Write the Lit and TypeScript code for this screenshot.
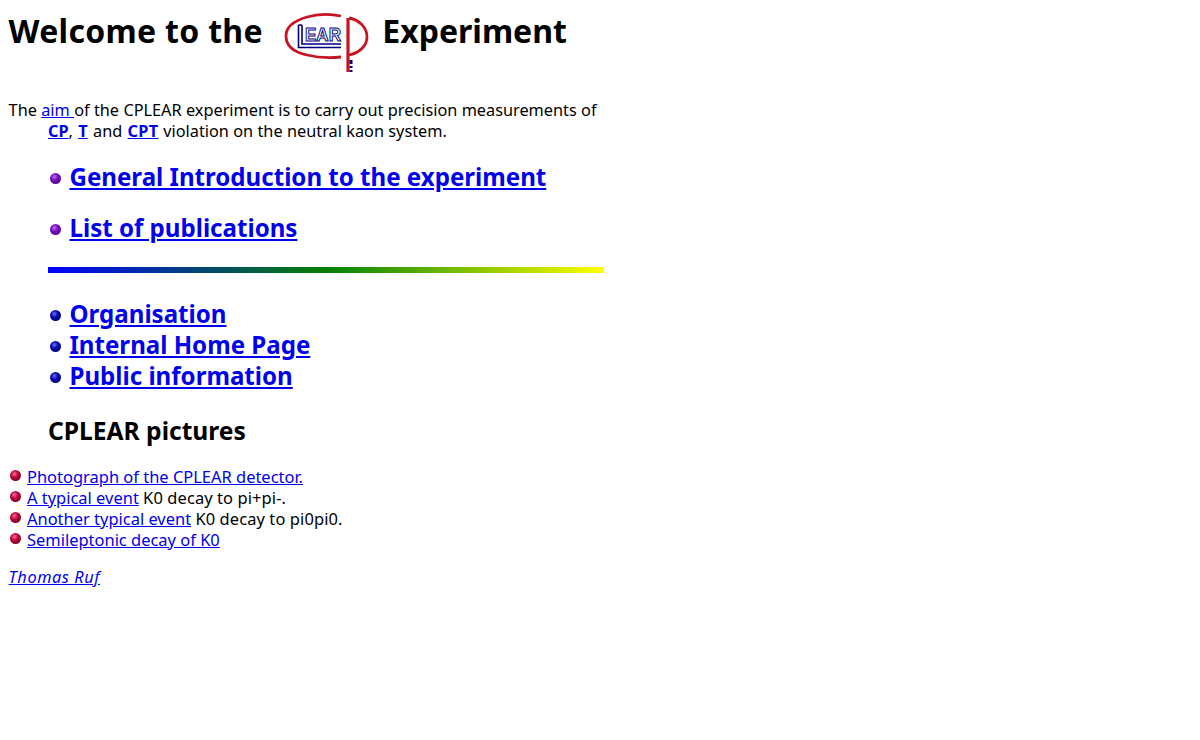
import { LitElement, html, css } from "lit";
import { customElement } from "lit/decorators.js";

const ball = (cls: string) => html`<span class="ball ${cls}"></span>`;

@customElement("app-root")
export class AppRoot extends LitElement {
  static styles = css`
    :host { display: block; font-family: "Noto Sans", sans-serif; font-size: 16.3px; color: #000; background: #fff; min-height: 740px; }
    .page { width: 604px; padding: 8px 0 0 8.600px; box-sizing: content-box; }
    a { color: #0000ee; text-decoration: underline; }
    h1 { margin: 0; display: flex; align-items: flex-start; font-size: 32px; line-height: 46px; font-weight: 700; white-space: nowrap; }
    .welcome { letter-spacing: 0.3px; }
    .logo { display: block; width: 88px; height: 64px; margin: 3px 11px 0 20.400px; }
    .aim { margin: 25px 0 0; line-height: 21px; padding-left: 39.400px; text-indent: -39.400px; width: 595px; box-sizing: border-box; word-spacing: 0.1px; }
    .aim b { font-weight: 700; }
    .t { margin-left: 1px; }
    .and { margin: 0 1px; }
    .cpt { letter-spacing: 0.3px; margin-right: 0.500px; }
    .indent { padding-left: 39.400px; }
    .big { margin: 0; padding: 0; list-style: none; font-size: 24.100px; font-weight: 700; }
    .big li { display: flex; align-items: center; gap: 8.500px; line-height: 31px; }
    .big .ball { position: relative; top: 2px; }
    .spaced { margin-top: 19px; }
    .spaced li + li { margin-top: 20px; }
    .ball { flex: none; display: block; width: 11px; height: 11px; border-radius: 50%; margin-left: 2px; }
    .purple { background: radial-gradient(circle at 40% 35%, #c070ff 0, #7a10c0 35%, #3a0070 100%); }
    .navy { background: radial-gradient(circle at 40% 35%, #7070ff 0, #0808b0 35%, #000050 100%); }
    .red { background: radial-gradient(circle at 40% 35%, #ff7090 0, #c00840 35%, #500018 100%); }
    .rule { height: 6px; width: 556px; margin: 24px 0 0; background: linear-gradient(90deg, #0000ff 0%, #008000 50%, #ffff00 100%); }
    .orgs { margin-top: 25px; }
    h2 { margin: 23px 0 0; font-size: 24.600px; line-height: 33px; font-weight: 700; }
    .small { margin: 19px 0 0; padding: 0; list-style: none; font-size: 16.470px; }
    .small li { display: flex; align-items: flex-start; gap: 6.400px; line-height: 21px; }
    .small .ball { margin: 4px 0 0 1px; }
    .k0 { letter-spacing: 0.1px; }
    .sig { margin: 17px 0 0; line-height: 21px; font-style: italic; letter-spacing: 0.6px; }
  `;

  render() {
    return html`<div class="page">
      <h1>
        <span class="welcome">Welcome to the</span>
        <svg class="logo" viewBox="0 0 88 64" aria-hidden="true">
          <path d="M58 5 C48 3 34 3 24 6 C10 10 3 17 3 25 C3 34 10 41 24 44 C36 47 48 47 58 46" fill="none" stroke="#c81420" stroke-width="2.800"/>
          <path d="M65 7 L65 61" stroke="#c81420" stroke-width="3.200"/>
          <path d="M66 7 C77 9 84 17 84 26 C84 35 76 42 66 44" fill="none" stroke="#c81420" stroke-width="2.800"/>
          <path d="M15.500 14 V36.500 H58 M19 14 V33 H58 M15.500 14 H19" fill="none" stroke="#000080" stroke-width="1.600"/>
          <text x="22" y="30" font-family="Liberation Sans, sans-serif" font-size="18" font-weight="700" textLength="36" lengthAdjust="spacingAndGlyphs" fill="#fff" stroke="#000080" stroke-width="1">EAR</text>
          <path d="M68 49 V53 M68 55 V57 M68 59 V61" stroke="#000080" stroke-width="3"/>
        </svg>
        <span>Experiment</span>
      </h1>
      <p class="aim">The <a href="#">aim </a>of the CPLEAR experiment is to carry out precision measurements of
        <a href="#"><b>CP</b></a>, <a class="t" href="#"><b>T</b></a> <span class="and">and</span> <a href="#"><b class="cpt">CPT</b></a> violation on the neutral kaon system.</p>
      <div class="indent">
        <ul class="big spaced">
          <li>${ball("purple")}<a href="#">General Introduction to the experiment</a></li>
          <li>${ball("purple")}<a href="#">List of publications</a></li>
        </ul>
        <div class="rule"></div>
        <ul class="big orgs">
          <li>${ball("navy")}<a href="#">Organisation</a></li>
          <li>${ball("navy")}<a href="#">Internal Home Page</a></li>
          <li>${ball("navy")}<a href="#">Public information</a></li>
        </ul>
        <h2>CPLEAR pictures</h2>
      </div>
      <ul class="small">
        <li>${ball("red")}<span><a href="#">Photograph of the CPLEAR detector.</a></span></li>
        <li>${ball("red")}<span><a href="#">A typical event</a> <span class="k0">K0 decay to pi+pi-.</span></span></li>
        <li>${ball("red")}<span><a href="#">Another typical event</a> <span class="k0">K0 decay to pi0pi0.</span></span></li>
        <li>${ball("red")}<span><a href="#">Semileptonic decay of K0</a></span></li>
      </ul>
      <p class="sig"><a href="#">Thomas Ruf</a></p>
    </div>`;
  }
}
